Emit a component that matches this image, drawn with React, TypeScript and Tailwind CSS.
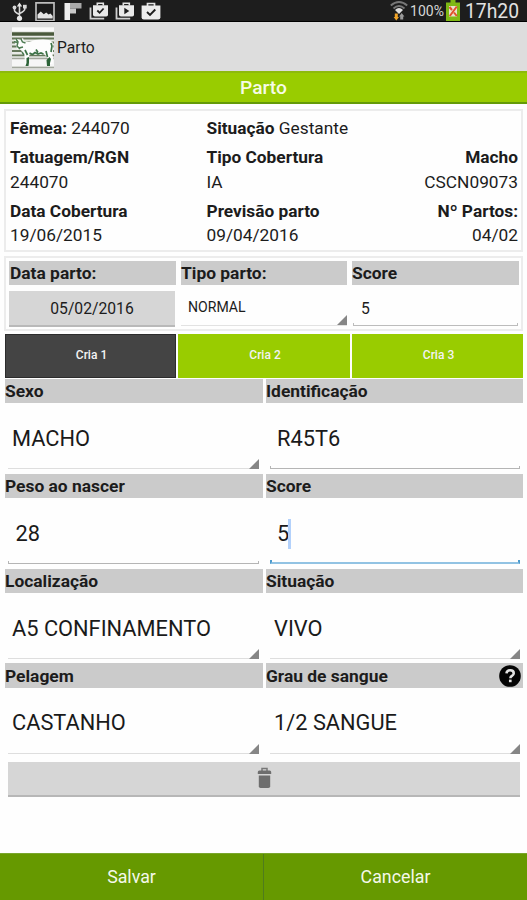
import React, { useState } from 'react';

const INFO_ROWS = [
  [
    { label: 'Tatuagem/RGN', value: '244070' },
    { label: 'Tipo Cobertura', value: 'IA' },
    { label: 'Macho', value: 'CSCN09073' },
  ],
  [
    { label: 'Data Cobertura', value: '19/06/2015' },
    { label: 'Previsão parto', value: '09/04/2016' },
    { label: 'Nº Partos:', value: '04/02' },
  ],
];

const FIELDS = [
  { label: 'Sexo', value: 'MACHO', kind: 'spinner' },
  { label: 'Identificação', value: 'R45T6', kind: 'input' },
  { label: 'Peso ao nascer', value: '28', kind: 'input' },
  { label: 'Score', value: '5', kind: 'focused' },
  { label: 'Localização', value: 'A5 CONFINAMENTO', kind: 'spinner' },
  { label: 'Situação', value: 'VIVO', kind: 'spinner' },
  { label: 'Pelagem', value: 'CASTANHO', kind: 'spinner' },
  { label: 'Grau de sangue', value: '1/2 SANGUE', kind: 'spinner', help: true },
];

function BagIcon({ glyph, stacked }: { glyph: 'check' | 'play'; stacked?: boolean }) {
  return (
    <svg width="20" height="20" viewBox="0 0 20 20" className="shrink-0">
      {stacked && <path d="M1.5 6.500v11.200h13.700" fill="none" stroke="#cfcfcf" strokeWidth="1.8" />}
      {stacked ? (
        <>
          <path d="M8.300 4.500V2.300h6v2.200" fill="none" stroke="#e4e4e4" strokeWidth="1.6" />
          <path d="M4 4.300h15v9.500q0 1.800-1.800 1.800H6q-2 0-2-1.800z" fill="#e9e9e9" />
          {glyph === 'check' ? (
            <path d="M8.300 9.500l2.300 2.300 4-4.300" fill="none" stroke="#1d1d1d" strokeWidth="1.8" />
          ) : (
            <path d="M9.300 6.800l5 3.200-5 3.200z" fill="#1d1d1d" />
          )}
        </>
      ) : (
        <>
          <path d="M6.500 5V2.500h7V5" fill="none" stroke="#e4e4e4" strokeWidth="1.700" />
          <path d="M.6 4.500h18.800v11.800q0 2.200-2.200 2.200H2.800Q.6 18.500.6 16.300z" fill="#ececec" />
          <path d="M6 11l3 3 5.300-5.500" fill="none" stroke="#1d1d1d" strokeWidth="1.900" />
        </>
      )}
    </svg>
  );
}

function StatusBar() {
  return (
    <div className="flex h-[22px] items-start justify-between border-b border-black bg-[#1d1d1d] text-[#d6d6d6]">
      <div className="flex items-start pl-[12px] pt-[1px]">
        {/* usb */}
        <svg width="16" height="20" viewBox="0 0 16 20" className="mr-[7px]">
          <path d="M7.500 3v13M2.500 6v3.500q0 1.500 5 4M12.800 5v3q0 2-5.300 4.500" fill="none" stroke="#d8d8d8" strokeWidth="1.600" />
          <path d="M7.500 1.500l2.700 4H4.800z" fill="#e6e6e6" />
          <circle cx="7.500" cy="17.300" r="2.600" fill="#e6e6e6" />
          <circle cx="2.500" cy="6.500" r="1.900" fill="#d8d8d8" />
          <path d="M11 3.800h3.700v3.700H11z" fill="#d8d8d8" />
        </svg>
        {/* gallery */}
        <svg width="20" height="20" viewBox="0 0 20 20" className="mr-[9px]">
          <path d="M1 1.800h18V19.500H1z" fill="#1b1b1b" stroke="#bdbdbd" strokeWidth="1.700" />
          <path d="M2.500 17.500v-4l3.300-3 3 2.800 2.400-1.800 2.400 2 1.800-1 2.300 2.500v2.500z" fill="#e3e3e3" />
        </svg>
        {/* flipboard */}
        <svg width="18" height="20" viewBox="0 0 18 20" className="mr-[7px]">
          <path d="M.5 2H6v17H.5z" fill="#efefef" />
          <path d="M6 2h11.500v5.500H6z" fill="#a9a9a9" />
          <path d="M6 7.500h6v5H6z" fill="#c9c9c9" />
        </svg>
        <div className="flex gap-[6px]">
          <BagIcon glyph="check" stacked />
          <BagIcon glyph="play" stacked />
          <BagIcon glyph="check" />
        </div>
      </div>

      <div className="flex items-start pr-[8px]">
        {/* wifi with transfer arrows */}
        <svg width="18" height="20" viewBox="0 0 18 20" className="mr-[2px] mt-[1px]">
          <path d="M.8 4.500Q9-2.500 17.200 4.500M3.500 7.500Q9 2.500 14.500 7.500" fill="none" stroke="#777" strokeWidth="1.900" />
          <path d="M5 9q4-3.800 8 0l-4 4z" fill="#dedede" />
          <path d="M4.800 12.500h3v3.500h1.200l-2.700 3.500L3.600 16h1.200z" fill="#f0a428" />
          <path d="M10.200 18.500v-3H9l2.700-3.500 2.700 3.500h-1.200v3z" fill="#9a9a9a" />
        </svg>
        <span className="mt-[1px] w-[36px] text-[14px] leading-[20px]">100%</span>
        <svg width="14" height="21" viewBox="0 0 14 21" className="mr-[5px]">
          <path d="M4.500 0h5v2.500H14V21H0V2.500h4.500z" fill="#7fb814" />
          <path d="M3 6h8v10.500H3z" fill="#e9e3cb" />
          <path d="M3.500 7l2.500 3M10.800 6.500l-7 9.500M8 12.500l2.800 3.500" stroke="#e2502c" strokeWidth="2" fill="none" />
        </svg>
        <span className="text-[19.300px] leading-[23px] text-[#e2e2e2]">17h20</span>
      </div>
    </div>
  );
}

function CowLogo() {
  return (
    <svg width="42" height="42" viewBox="0 0 42 42" className="shrink-0">
      <path d="M0 0h42v42H0z" fill="#e9ebe7" />
      <path d="M0 .5h42v3.500H0z" fill="#fafafa" />
      {/* fence boards */}
      <path d="M0 7h42" stroke="#4a5a3c" strokeWidth="3.500" />
      <path d="M0 11.500h42M0 15.500h42M0 19.500h42M0 24h42M0 28.300h42" stroke="#66785b" strokeWidth="1.800" />
      <path d="M0 32h42v7H0z" fill="#f6f6f6" />
      <path d="M0 31.500h42M0 40.500h42" stroke="#a3a79d" strokeWidth="1.300" />
      {/* body */}
      <path d="M2 13l3-1 3 1 3-2 1 3 5 1 6-2 8-.5 6 .5 3.500 2 1 5-1 8 1 4-1 5h-4l-.5-6-4-4-4 1-6-.5-4-1-1.500 5-.5 6h-3l-.5-9-2.500-4-2-3-2.500 1L4 19z" fill="#fdfdfd" />
      <path d="M2 14.500l3 1M4 12l2 3-1 4 3 3M9 12l1.500 3 3 1M7 21l4-1M10 25l2 3" fill="none" stroke="#4c7a51" strokeWidth="1.500" />
      <path d="M13 23l2.500 5M17.500 26l3 1.500 2.500-2 3 1.500 3-1 2.500 1M34 24l1.500 6M24 22.500l2 3M39 16l1 3-1 6" fill="none" stroke="#3c7246" strokeWidth="1.700" />
      <path d="M14.500 31l2.500-1v5.500l-.5 3.500H13.500l1-3zM34.500 33l3-3 1.500 2-1 4v3H35z" fill="#2c6338" />
    </svg>
  );
}

function Corner() {
  return (
    <svg width="10" height="10" viewBox="0 0 10 10" className="absolute bottom-0 right-0">
      <path d="M10 0v10H0z" fill="#868686" />
    </svg>
  );
}

function Label({ children, className = '' }: { children: React.ReactNode; className?: string }) {
  return (
    <div className={`flex items-center justify-between bg-[#cbcbcb] text-[17.4px] font-bold text-[#1c1c1c] ${className}`}>
      {children}
    </div>
  );
}

const LINES: Record<string, string> = {
  spinner: 'h-px border-b border-[#dedede]',
  input: 'h-[3px] border-x border-b border-[#b5b5b5]',
  focused: 'h-[4px] border-x-2 border-b-2 border-x-[#4d9bcd] border-b-[#92c3e3]',
};

function Field({ field, right }: { field: (typeof FIELDS)[number]; right: boolean }) {
  const isSpinner = field.kind === 'spinner';
  const pad = isSpinner ? (right ? 'pl-[4px]' : 'pl-[4px]') : right ? 'pl-[7px]' : 'pl-[7.500px]';

  return (
    <div className="h-[94.8px]">
      <Label className="h-[24.4px]">
        <span>{field.label}</span>
        {field.help && (
          <svg width="22" height="22" viewBox="0 0 23 23" className="mr-[2px]">
            <circle cx="11.5" cy="11.5" r="11.300" fill="#050505" />
            <path d="M7.800 8.800q.3-3.300 3.900-3.300 3.700 0 3.700 3 0 1.700-1.900 2.900-1.600 1-1.600 2.400" fill="none" stroke="#e4e4e4" strokeWidth="2.700" />
            <path d="M10.400 15.300h2.800V18h-2.800z" fill="#e4e4e4" />
          </svg>
        )}
      </Label>
      <div className={`relative h-[66px] ${right ? 'ml-[4px] mr-[3px]' : 'ml-[3px] mr-[4px]'}`}>
        <div className={`flex h-full items-center pt-[6px] text-[21.8px] text-[#1a1a1a] ${pad}`}>
          {field.value}
          {field.kind === 'focused' && <span className="-ml-[1px] h-[30px] w-[3px] bg-[#b3d1fb]" />}
        </div>
        <div className={`absolute inset-x-0 bottom-0 ${LINES[field.kind]}`} />
        {isSpinner && <Corner />}
      </div>
    </div>
  );
}

export default function App() {
  const [tab, setTab] = useState(0);

  return (
    <div className="flex h-[900px] w-[527px] flex-col overflow-hidden bg-[#fefefe] font-['Roboto',sans-serif] text-[#1c1c1c]">
      <StatusBar />

      {/* Action bar */}
      <div className="flex h-[49px] items-center bg-[#dddddd] pl-[12px] pt-[2px]">
        <CowLogo />
        <span className="ml-[3px] pt-[3px] text-[15.6px]">Parto</span>
      </div>
      <div className="flex h-[33px] items-center justify-center border-b-2 border-t-2 border-b-[#649a08] border-t-[#8dba0c] bg-[#99cc00] pt-[2px] text-[19.2px] font-medium text-[#f6fbe6]">
        Parto
      </div>

      {/* Female summary */}
      <div className="mx-[4px] mt-[5px] h-[143px] border-2 border-[#ececec] pl-[4px] pr-[3px] pt-[5px] text-[17.3px] leading-[24.5px]">
        <div className="flex">
          <div className="w-[196.500px]"><b>Fêmea:</b> 244070</div>
          <div><b>Situação</b> Gestante</div>
        </div>
        {INFO_ROWS.map((row, idx) => (
          <div key={idx} className="mt-[4.5px] flex">
            {row.map((cell, i) => (
              <div key={cell.label} className={i === 2 ? 'flex-1 text-right' : 'w-[196.500px]'}>
                <div className="font-bold">{cell.label}</div>
                <div>{cell.value}</div>
              </div>
            ))}
          </div>
        ))}
      </div>

      {/* Birth data */}
      <div className="mx-[4px] mt-[4px] grid h-[75px] grid-cols-[167px_166px_167px] gap-x-[5px] border-2 border-[#ececec] px-[3px] pt-[3px]">
        <div>
          <Label className="h-[23.5px] pl-px">Data parto:</Label>
          <div className="mt-[6px] mr-[1px] flex h-[36px] items-center justify-center border-b-2 border-[#b9b9b9] bg-[#d6d6d6] pt-[2px] text-[15.7px]">
            05/02/2016
          </div>
        </div>
        <div>
          <Label className="h-[23.5px]">Tipo parto:</Label>
          <div className="relative mt-[6px] flex h-[35px] items-center border-b border-[#e2e2e2] pl-[7px] text-[14.1px]">
            NORMAL
            <Corner />
          </div>
        </div>
        <div>
          <Label className="h-[23.5px]">Score</Label>
          <div className="relative mx-[1px] mt-[6px] flex h-[35px] items-center pl-[8px] pt-[2px] text-[15.700px]">
            5
            <div className="absolute inset-x-0 bottom-0 h-[3px] border-x border-b border-[#bcbcbc]" />
          </div>
        </div>
      </div>

      {/* Calf tabs */}
      <div className="ml-[5px] mr-[4px] mt-[3px] grid h-[44px] grid-cols-[171px_172px_171px] gap-x-[2px]">
        {['Cria 1', 'Cria 2', 'Cria 3'].map((name, i) => (
          <button
            key={name}
            onClick={() => setTab(i)}
            className={`pb-[3px] pl-[2px] text-[12px] font-medium text-[#f3f3f3] ${
              tab === i ? 'border border-[#2c2c2c] bg-[#444444]' : 'bg-[#99cc00]'
            }`}
          >
            {name}
          </button>
        ))}
      </div>

      {/* Calf form */}
      <div className="ml-[5px] mr-[4px] mt-[1px] grid grid-cols-[258px_257px] gap-x-[3px]">
        {FIELDS.map((f, i) => (
          <Field key={i} field={f} right={i % 2 === 1} />
        ))}
      </div>

      <div className="ml-[8px] mr-[7px] mt-[3.5px] flex h-[35px] shrink-0 items-center justify-center border-b-2 border-[#b7b7b7] bg-[#d6d6d6]">
        <svg width="15" height="22" viewBox="0 0 14 22">
          <path d="M4.500 4V1.500h5V4" fill="none" stroke="#777" strokeWidth="1.500" />
          <path d="M.3 7V5q0-1.500 1.500-1.500h10.400q1.500 0 1.500 1.500v2z" fill="#6e6e6e" />
          <path d="M1.300 8.500h11.400v10.700q0 1.800-1.800 1.800H3.100q-1.800 0-1.800-1.800z" fill="#6e6e6e" />
        </svg>
      </div>

      {/* Footer actions */}
      <div className="mt-auto flex h-[47px] border-t border-[#79a62c] bg-[#669900] text-[17.8px] text-[#f4f8ea]">
        <button className="w-[264px] border-r border-[#4f7c1c]">Salvar</button>
        <button className="flex-1">Cancelar</button>
      </div>
    </div>
  );
}
